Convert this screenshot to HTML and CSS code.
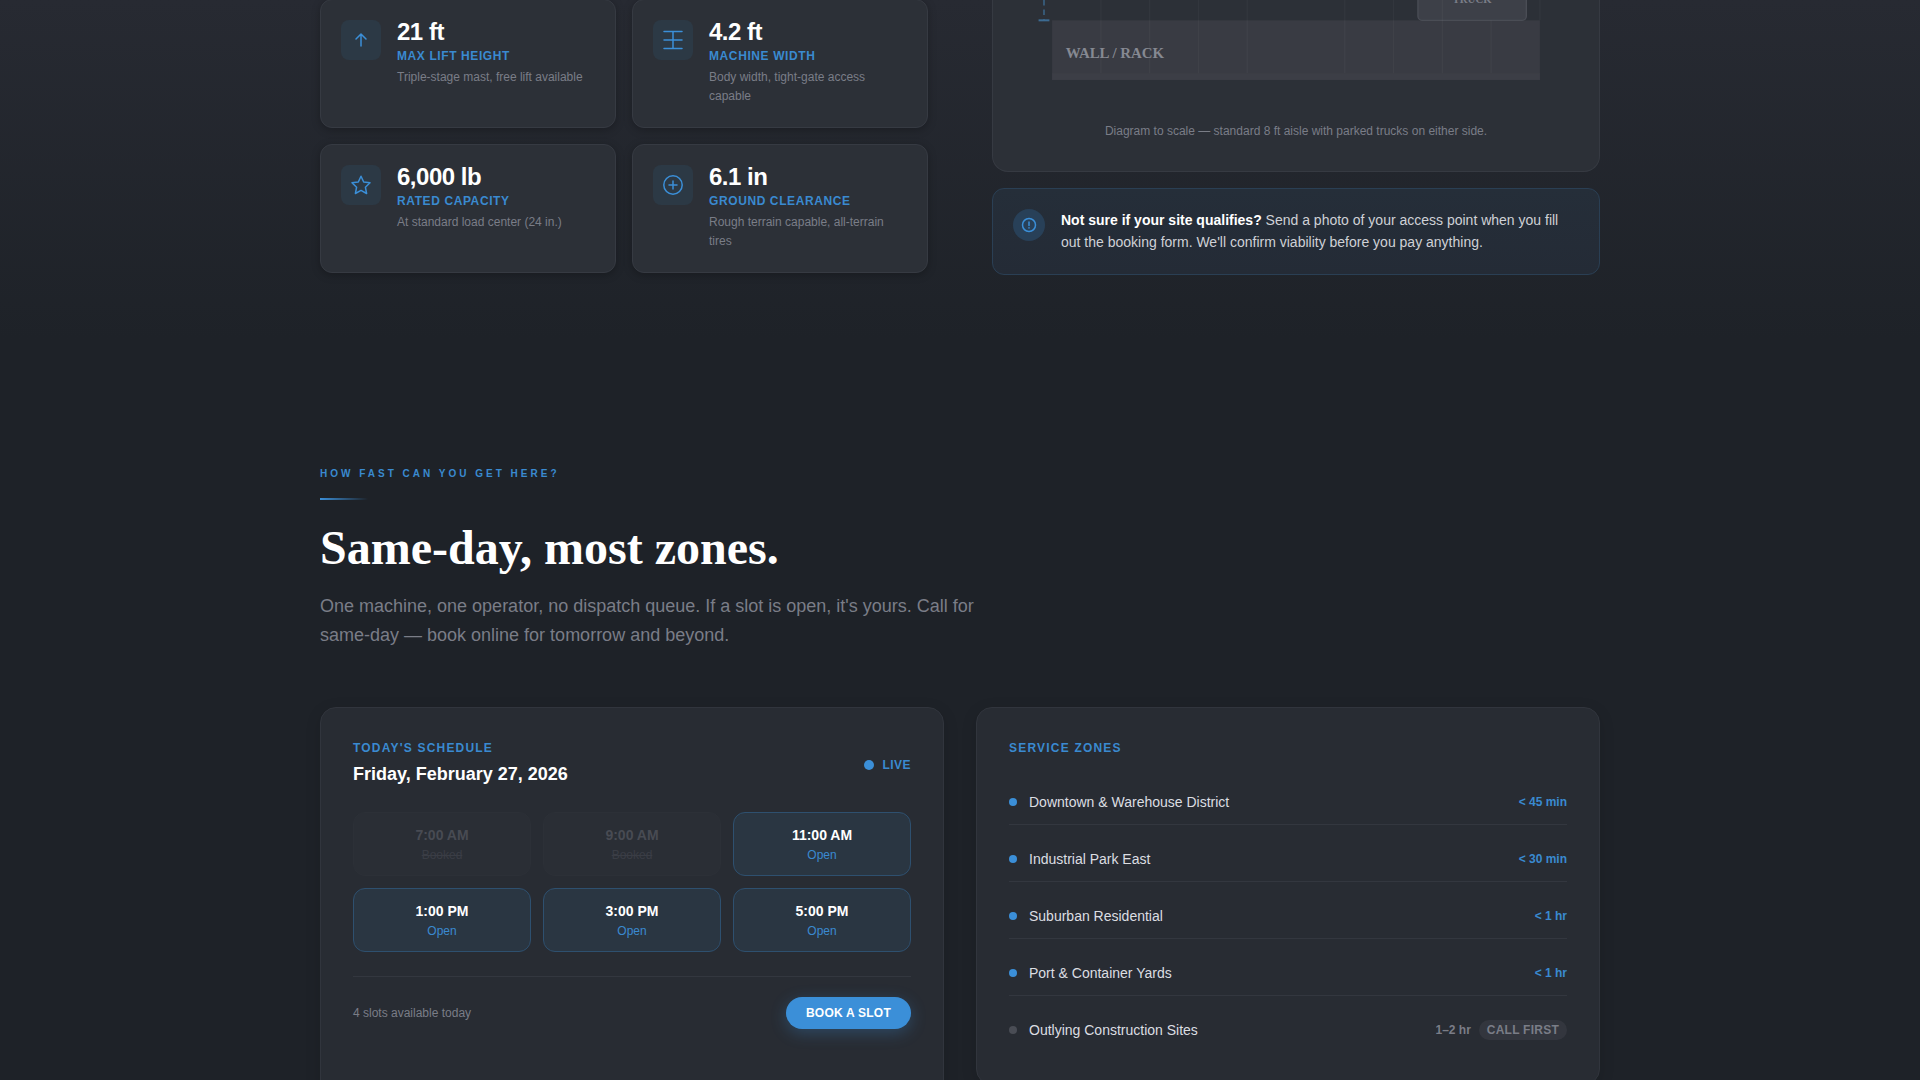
FILE: index.html
```html
<!DOCTYPE html>
<html lang="en">
<head>
<meta charset="utf-8">
<meta name="viewport" content="width=device-width, initial-scale=1">
<title>Specs and availability</title>
<link rel="stylesheet" href="styles.css">
</head>
<body>
<section class="section section-specs">
  <div class="container specs-layout">
    <div class="spec-grid">
      <article class="spec-card">
        <span class="spec-icon"><svg width="20" height="20" viewBox="0 0 20 20"><path d="M10 16V4.500M5 9l5-5 5 5"/></svg></span>
        <div>
          <h3 class="spec-value">21 ft</h3>
          <p class="spec-label">Max Lift Height</p>
          <p class="spec-desc">Triple-stage mast, free lift available</p>
        </div>
      </article>
      <article class="spec-card">
        <span class="spec-icon"><svg width="20" height="20" viewBox="0 0 20 20"><path d="M1 1.500h18M1 10h18M1 18.500h18M10 1.500v17"/></svg></span>
        <div>
          <h3 class="spec-value">4.2 ft</h3>
          <p class="spec-label">Machine Width</p>
          <p class="spec-desc">Body width, tight-gate access capable</p>
        </div>
      </article>
      <article class="spec-card">
        <span class="spec-icon"><svg width="20" height="20" viewBox="0 0 20 20"><path d="M10 1.200l2.700 5.800 6.300.8-4.600 4.400 1.200 6.300-5.600-3.100-5.600 3.100 1.200-6.300L1 7.800 7.300 7z"/></svg></span>
        <div>
          <h3 class="spec-value">6,000 lb</h3>
          <p class="spec-label">Rated Capacity</p>
          <p class="spec-desc">At standard load center (24 in.)</p>
        </div>
      </article>
      <article class="spec-card">
        <span class="spec-icon"><svg width="20" height="20" viewBox="0 0 20 20"><circle cx="10" cy="10" r="9.200"/><path d="M10 6v8M6 10h8"/></svg></span>
        <div>
          <h3 class="spec-value">6.1 in</h3>
          <p class="spec-label">Ground Clearance</p>
          <p class="spec-desc">Rough terrain capable, all-terrain tires</p>
        </div>
      </article>
    </div>

    <div class="fit-column">
      <figure class="diagram-card">
        <svg class="diagram" viewBox="0 185 400 77" role="img" aria-label="Aisle diagram">
          <rect x="20" y="200" width="360" height="44" class="wall"/>
          <rect x="20" y="239" width="360" height="5" class="wall-edge"/>
          <path d="M56 185v54M92 185v54M128 185v54M164 185v54M236 185v54M272 185v54M380 185v15" class="grid-line"/>
          <path d="M14 185v15" class="measure-dash"/>
          <path d="M10 200h8" class="measure"/>
          <rect x="290" y="160" width="80" height="40" rx="3" class="truck"/>
          <path d="M308 185v54M344 200v39" class="grid-line"/>
          <text x="330" y="187" text-anchor="middle" class="truck-text">TRUCK</text>
          <text x="30" y="228" class="wall-text">WALL / RACK</text>
        </svg>
        <figcaption class="diagram-caption">Diagram to scale — standard 8 ft aisle with parked trucks on either side.</figcaption>
      </figure>
      <aside class="callout">
        <span class="callout-icon"><svg width="16" height="16" viewBox="0 0 16 16"><circle cx="8" cy="8" r="6.500"/><path d="M8 5v3.500M8 10.700v.3"/></svg></span>
        <p class="callout-text"><strong>Not sure if your site qualifies?</strong> Send a photo of your access point when you fill out the booking form. We'll confirm viability before you pay anything.</p>
      </aside>
    </div>
  </div>
</section>

<section class="section section-speed">
  <div class="container">
    <p class="eyebrow">How fast can you get here?</p>
    <div class="accent-rule"></div>
    <h2 class="headline">Same-day, most zones.</h2>
    <p class="lead">One machine, one operator, no dispatch queue. If a slot is open, it's yours. Call for same-day — book online for tomorrow and beyond.</p>

    <div class="panels">
      <div class="panel panel-schedule">
        <header class="schedule-header">
          <div>
            <p class="panel-label">Today's Schedule</p>
            <h3 class="schedule-date">Friday, February 27, 2026</h3>
          </div>
          <span class="live"><span class="live-dot"></span>Live</span>
        </header>
        <div class="slots">
          <button type="button" class="slot slot-booked" disabled><span class="slot-time">7:00 AM</span><span class="slot-state">Booked</span></button>
          <button type="button" class="slot slot-booked" disabled><span class="slot-time">9:00 AM</span><span class="slot-state">Booked</span></button>
          <button type="button" class="slot"><span class="slot-time">11:00 AM</span><span class="slot-state">Open</span></button>
          <button type="button" class="slot"><span class="slot-time">1:00 PM</span><span class="slot-state">Open</span></button>
          <button type="button" class="slot"><span class="slot-time">3:00 PM</span><span class="slot-state">Open</span></button>
          <button type="button" class="slot"><span class="slot-time">5:00 PM</span><span class="slot-state">Open</span></button>
        </div>
        <footer class="schedule-footer">
          <span class="slot-count">4 slots available today</span>
          <button type="button" class="book">Book a Slot</button>
        </footer>
      </div>

      <div class="panel">
        <h3 class="panel-label">Service Zones</h3>
        <ul class="zones">
          <li class="zone"><span class="zone-dot"></span><span class="zone-name">Downtown &amp; Warehouse District</span><span class="zone-time">&lt; 45 min</span></li>
          <li class="zone"><span class="zone-dot"></span><span class="zone-name">Industrial Park East</span><span class="zone-time">&lt; 30 min</span></li>
          <li class="zone"><span class="zone-dot"></span><span class="zone-name">Suburban Residential</span><span class="zone-time">&lt; 1 hr</span></li>
          <li class="zone"><span class="zone-dot"></span><span class="zone-name">Port &amp; Container Yards</span><span class="zone-time">&lt; 1 hr</span></li>
          <li class="zone zone-far"><span class="zone-dot"></span><span class="zone-name">Outlying Construction Sites</span><span class="zone-time">1–2 hr</span><span class="zone-tag">Call First</span></li>
        </ul>
      </div>
    </div>
  </div>
</section>
</body>
</html>
```
FILE: styles.css
```css
:root {
  --bg: #1e2228;
  --surface: #2c3037;
  --panel: #282c33;
  --line: #363a42;
  --blue: #3b8fd8;
  --label: #3a8ad0;
  --muted: #7a7d87;
}

* { box-sizing: border-box; }

body {
  height: 100vh;
  margin: 0;
  overflow: hidden;
  background: var(--bg);
  color: #fff;
  font-family: "Liberation Sans", Arial, sans-serif;
  font-size: 14px;
}

h2, h3, p, ul, figure { margin: 0; padding: 0; }

.container {
  max-width: 1280px;
  margin: 0 auto;
}

.section-specs {
  padding-bottom: 94px;
  background: linear-gradient(#272a32, #1e2228 92%);
}

.specs-layout {
  display: grid;
  grid-template-columns: 1fr 1fr;
  gap: 64px;
  align-items: start;
}

.spec-grid {
  display: grid;
  grid-template-columns: 1fr 1fr;
  grid-auto-rows: minmax(129px, auto);
  gap: 16px;
  margin-top: -1px;
}

.spec-card {
  display: flex;
  align-items: flex-start;
  gap: 16px;
  padding: 20px;
  background: var(--surface);
  border: 1px solid var(--line);
  border-radius: 12px;
  box-shadow: 0 2px 8px rgba(0, 0, 0, 0.25);
}

.spec-icon {
  display: flex;
  flex: none;
  align-items: center;
  justify-content: center;
  width: 40px;
  height: 40px;
  border-radius: 8px;
  background: #2c3945;
}

.spec-icon svg, .callout-icon svg {
  fill: none;
  stroke: var(--blue);
  stroke-width: 1.5;
  stroke-linecap: round;
  stroke-linejoin: round;
}

.spec-value {
  margin-bottom: 3px;
  font-size: 24px;
  line-height: 24px;
  letter-spacing: -0.02em;
}

.spec-label {
  margin-bottom: 2px;
  color: var(--label);
  font-size: 12px;
  font-weight: 700;
  line-height: 19px;
  letter-spacing: 0.05em;
  text-transform: uppercase;
}

.spec-desc {
  color: var(--muted);
  font-size: 12px;
  line-height: 19px;
}

.fit-column {
  display: flex;
  flex-direction: column;
  gap: 16px;
}

.diagram-card {
  padding: 0 32px 30px;
  background: var(--surface);
  border: 1px solid var(--line);
  border-top: 0;
  border-radius: 0 0 16px 16px;
}

.diagram {
  display: block;
  width: 100%;
  margin-bottom: 18px;
  font-family: "Liberation Serif", "Times New Roman", serif;
  font-weight: 700;
}

.wall { fill: #393b43; }
.wall-edge { fill: #3c3e46; }
.grid-line { stroke: #fff; stroke-opacity: 0.03; }
.measure { stroke: #3c6b92; stroke-width: 1.5; }
.measure-dash { stroke: #3c6b92; stroke-dasharray: 4 3; }
.truck { fill: #3d4048; stroke: #4a4d55; }
.truck-text { fill: #7a7d87; font-size: 8px; }
.wall-text { fill: #868992; font-size: 11px; }

.diagram-caption {
  color: var(--muted);
  font-size: 12px;
  line-height: 19px;
  text-align: center;
}

.callout {
  display: flex;
  align-items: flex-start;
  gap: 16px;
  padding: 20px 20px 21px;
  background: linear-gradient(#252e39, #242b36);
  border: 1px solid #2a3f54;
  border-radius: 12px;
}

.callout-icon {
  display: flex;
  flex: none;
  align-items: center;
  justify-content: center;
  width: 32px;
  height: 32px;
  border-radius: 50%;
  background: #284058;
}

.callout-text {
  color: #cfd1d6;
  line-height: 22px;
}

.callout-text strong { color: #fff; }

.section-speed { padding: 96px 0; }

.eyebrow {
  color: var(--label);
  font-size: 10px;
  font-weight: 700;
  line-height: 18px;
  letter-spacing: 0.3em;
  text-transform: uppercase;
}

.accent-rule {
  width: 48px;
  height: 2px;
  margin: 15px 0 20px;
  background: linear-gradient(90deg, var(--blue), transparent);
}

.headline {
  margin-bottom: 16px;
  font-family: "Liberation Serif", "Times New Roman", serif;
  font-size: 48px;
  line-height: 56px;
}

.lead {
  max-width: 672px;
  color: var(--muted);
  font-size: 18px;
  line-height: 29px;
}

.panels {
  display: grid;
  grid-template-columns: 1fr 1fr;
  gap: 32px;
  align-items: start;
  margin-top: 57px;
}

.panel {
  padding: 33px 32px 32px;
  background: var(--panel);
  border: 1px solid #31353d;
  border-radius: 16px;
  box-shadow: 0 4px 16px rgba(0, 0, 0, 0.12);
}

.panel-schedule { padding-bottom: 96px; }

.panel-label {
  color: var(--label);
  font-size: 12px;
  font-weight: 700;
  line-height: 15px;
  letter-spacing: 0.1em;
  text-transform: uppercase;
}

.schedule-header {
  display: flex;
  align-items: center;
  justify-content: space-between;
}

.schedule-date {
  margin-top: 4px;
  font-size: 18px;
  line-height: 28px;
}

.live {
  display: flex;
  align-items: center;
  gap: 8px;
  color: var(--label);
  font-size: 12px;
  font-weight: 700;
  letter-spacing: 0.04em;
  text-transform: uppercase;
}

.live-dot {
  width: 10px;
  height: 10px;
  border-radius: 50%;
  background: var(--blue);
}

.slots {
  display: grid;
  grid-template-columns: repeat(3, 1fr);
  gap: 12px;
  margin: 24px 0;
}

.slot {
  display: flex;
  flex-direction: column;
  align-items: center;
  padding: 12px 16px 10px;
  background: #2a3642;
  border: 1px solid #2e506f;
  border-radius: 12px;
  color: #fff;
  font-family: inherit;
  line-height: 20px;
}

.slot-time { font-size: 14px; font-weight: 700; }
.slot-state { color: var(--label); font-size: 12px; }

.slot-booked {
  background: #2a2e35;
  border-color: #2c3037;
  color: #484b53;
}

.slot-booked .slot-state {
  color: #3a3d45;
  text-decoration: line-through;
}

.schedule-footer {
  display: flex;
  align-items: center;
  justify-content: space-between;
  padding-top: 20px;
  border-top: 1px solid #33373f;
}

.slot-count { color: var(--muted); font-size: 12px; }

.book {
  height: 32px;
  padding: 0 20px;
  background: var(--blue);
  border: 0;
  border-radius: 16px;
  box-shadow: 0 4px 16px rgba(59, 143, 216, 0.3);
  color: #fff;
  font-family: inherit;
  font-size: 12px;
  font-weight: 700;
  letter-spacing: 0.02em;
  text-transform: uppercase;
}

.zones {
  display: flex;
  flex-direction: column;
  gap: 12px;
  margin-top: 24px;
  list-style: none;
}

.zone {
  display: flex;
  align-items: center;
  padding: 11px 0;
  border-bottom: 1px solid #33373f;
  line-height: 22px;
}

.zone:last-child { border-bottom: 0; }

.zone-dot {
  width: 8px;
  height: 8px;
  margin-right: 12px;
  border-radius: 50%;
  background: var(--blue);
}

.zone-name { flex: 1; color: #dcdee2; }

.zone-time {
  color: var(--label);
  font-size: 12px;
  font-weight: 700;
}

.zone-far .zone-dot { background: #4a4d55; }
.zone-far .zone-time { color: var(--muted); }

.zone-tag {
  margin-left: 8px;
  padding: 0 8px;
  border-radius: 10px;
  background: #33363e;
  color: var(--muted);
  font-size: 12px;
  font-weight: 700;
  line-height: 20px;
  letter-spacing: 0.02em;
  text-transform: uppercase;
}
```
